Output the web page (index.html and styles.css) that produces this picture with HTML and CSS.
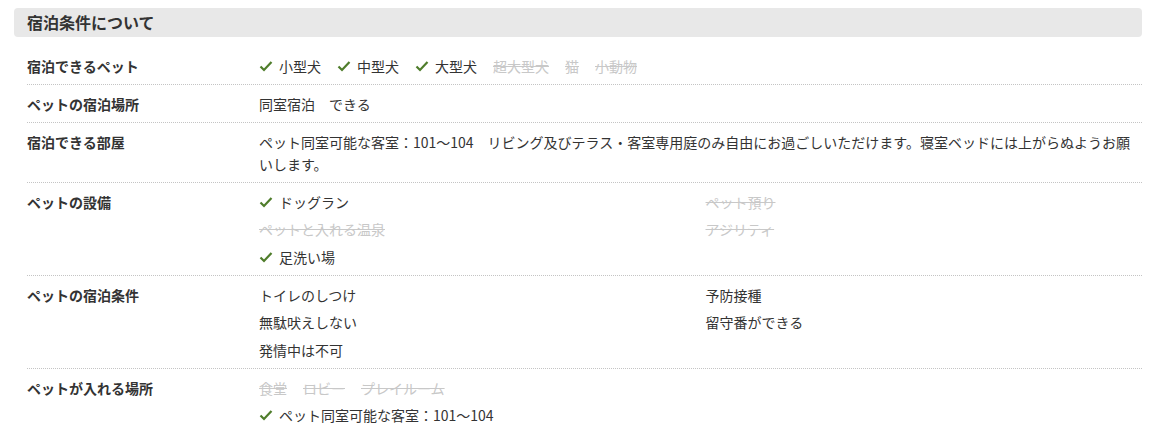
FILE: index.html
```html
<!DOCTYPE html>
<html lang="ja">
<head>
    <meta charset="UTF-8">
    <title>宿泊条件について</title>
    <link rel="stylesheet" href="styles.css">
</head>
<body>
<section class="conditions">
    <h2 class="cond-title">宿泊条件について</h2>
    <dl class="cond-list">
        <div class="cond-row">
            <dt>宿泊できるペット</dt>
            <dd>
                <ul class="inline-items">
                    <li class="ok"><svg class="chk" viewBox="0 0 14 14"><polyline points="1.5,7.5 5,11 12.5,3"/></svg>小型犬</li>
                    <li class="ok"><svg class="chk" viewBox="0 0 14 14"><polyline points="1.5,7.5 5,11 12.5,3"/></svg>中型犬</li>
                    <li class="ok"><svg class="chk" viewBox="0 0 14 14"><polyline points="1.5,7.5 5,11 12.5,3"/></svg>大型犬</li>
                    <li class="ng">超大型犬</li>
                    <li class="ng">猫</li>
                    <li class="ng">小動物</li>
                </ul>
            </dd>
        </div>
        <div class="cond-row">
            <dt>ペットの宿泊場所</dt>
            <dd>同室宿泊　できる</dd>
        </div>
        <div class="cond-row">
            <dt>宿泊できる部屋</dt>
            <dd>ペット同室可能な客室：101～104　リビング及びテラス・客室専用庭のみ自由にお過ごしいただけます。寝室ベッドには上がらぬようお願いします。</dd>
        </div>
        <div class="cond-row">
            <dt>ペットの設備</dt>
            <dd>
                <ul class="grid-items">
                    <li class="ok"><svg class="chk" viewBox="0 0 14 14"><polyline points="1.5,7.5 5,11 12.5,3"/></svg>ドッグラン</li>
                    <li class="ng">ペット預り</li>
                    <li class="ng">ペットと入れる温泉</li>
                    <li class="ng">アジリティ</li>
                    <li class="ok"><svg class="chk" viewBox="0 0 14 14"><polyline points="1.5,7.5 5,11 12.5,3"/></svg>足洗い場</li>
                </ul>
            </dd>
        </div>
        <div class="cond-row">
            <dt>ペットの宿泊条件</dt>
            <dd>
                <ul class="grid-items">
                    <li>トイレのしつけ</li>
                    <li>予防接種</li>
                    <li>無駄吠えしない</li>
                    <li>留守番ができる</li>
                    <li>発情中は不可</li>
                </ul>
            </dd>
        </div>
        <div class="cond-row">
            <dt>ペットが入れる場所</dt>
            <dd class="stack">
                <ul class="inline-items">
                    <li class="ng">食堂</li>
                    <li class="ng">ロビー</li>
                    <li class="ng">プレイルーム</li>
                </ul>
                <div class="ok"><svg class="chk" viewBox="0 0 14 14"><polyline points="1.5,7.5 5,11 12.5,3"/></svg>ペット同室可能な客室：101～104</div>
            </dd>
        </div>
    </dl>
</section>
</body>
</html>
```

FILE: styles.css
```css
body{
    margin: 0;
    background: #fff;
    color: #333;
    font-family: "Noto Sans CJK JP", "Noto Sans", sans-serif;
    font-size: 14px;
}
.conditions{
    padding: 8px 8px 0 14px;
}
.cond-title{
    margin: 0;
    height: 29px;
    padding-left: 13px;
    background: #e8e8e8;
    border-radius: 4px;
    font-size: 16px;
    font-weight: bold;
    line-height: 29px;
    color: #333;
}
.cond-list{
    margin: 10px 0 0 13px;
    padding: 0;
}
.cond-row{
    display: flex;
    padding: 7.5px 0;
    line-height: 22px;
    border-bottom: 1px dotted #c4c4c4;
}
.cond-row:last-child{
    border-bottom: none;
}
.cond-row dt{
    width: 232px;
    flex-shrink: 0;
    font-weight: bold;
    color: #333;
}
.cond-row dd{
    flex: 1;
    margin: 0;
    min-width: 0;
}
.inline-items,
.grid-items{
    list-style: none;
    margin: 0;
    padding: 0;
}
.inline-items{
    display: flex;
    flex-wrap: wrap;
    column-gap: 16px;
}
.grid-items{
    display: grid;
    grid-template-columns: 1fr 1fr;
    column-gap: 10px;
    row-gap: 5.5px;
}
.stack{
    display: flex;
    flex-direction: column;
    gap: 5.5px;
}
.ok{
    display: flex;
    align-items: center;
}
.ng{
    color: #c8c8c8;
    text-decoration: line-through;
}
.chk{
    width: 14px;
    height: 14px;
    margin-right: 6px;
    flex-shrink: 0;
}
.chk polyline{
    fill: none;
    stroke: #4f7d2b;
    stroke-width: 2.2;
}
```
